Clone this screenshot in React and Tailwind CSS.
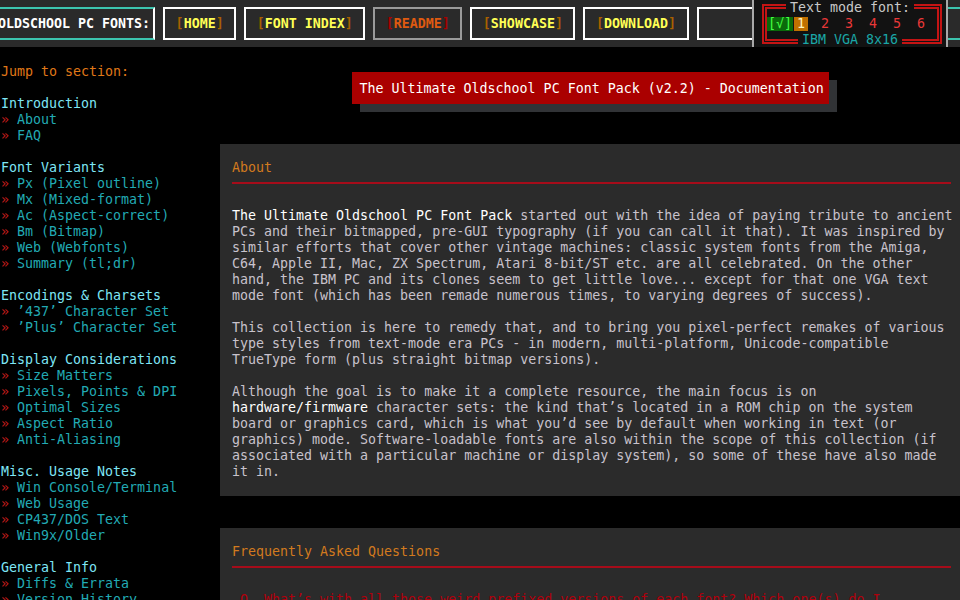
import React from "react";

const MONO = "font-['DejaVu_Sans_Mono','Liberation_Mono',monospace]";

const SECTIONS = [
  { title: "Introduction", items: ["About", "FAQ"] },
  {
    title: "Font Variants",
    items: [
      "Px (Pixel outline)",
      "Mx (Mixed-format)",
      "Ac (Aspect-correct)",
      "Bm (Bitmap)",
      "Web (Webfonts)",
      "Summary (tl;dr)",
    ],
  },
  { title: "Encodings & Charsets", items: ["’437’ Character Set", "’Plus’ Character Set"] },
  {
    title: "Display Considerations",
    items: ["Size Matters", "Pixels, Points & DPI", "Optimal Sizes", "Aspect Ratio", "Anti-Aliasing"],
  },
  {
    title: "Misc. Usage Notes",
    items: ["Win Console/Terminal", "Web Usage", "CP437/DOS Text", "Win9x/Older"],
  },
  { title: "General Info", items: ["Diffs & Errata", "Version History"] },
];

function NavButton({ label, active }) {
  return (
    <div
      className={`flex h-[33px] shrink-0 items-center border-2 px-[10.5px] font-bold ${
        active ? "border-[#9a9a9a]" : "border-white"
      }`}
    >
      <span className={active ? "text-[#a80000]" : "text-[#a86000]"}>[</span>
      <span className={active ? "text-[#e05a10]" : "text-[#ffff55]"}>{label}</span>
      <span className={active ? "text-[#a80000]" : "text-[#a86000]"}>]</span>
    </div>
  );
}

function TopBar() {
  return (
    <div className="flex h-[47px] shrink-0 items-center gap-2 overflow-hidden bg-[#2a2a2a] py-[7px]">
      <div className="ml-[-14px] flex h-[33px] shrink-0 items-center border-y-2 border-r-2 border-y-[#3cc4ae] border-r-white pl-[12px] pr-[3px] font-bold text-white">
        OLDSCHOOL PC FONTS:
      </div>
      <NavButton label="HOME" />
      <NavButton label="FONT INDEX" />
      <NavButton label="README" active />
      <NavButton label="SHOWCASE" />
      <NavButton label="DOWNLOAD" />
      <div className="h-[33px] w-[100px] shrink-0 border-2 border-white" />
      <div className="h-[33px] w-[200px] shrink-0 border-y-2 border-l-2 border-y-[#3cc4ae] border-l-white" />
    </div>
  );
}

function FontPicker() {
  return (
    <div className="absolute left-[752px] top-0 h-[47px] w-[196px] border-x-2 border-[#a8a8a8] bg-[#121212]">
      <div className="absolute bottom-[3px] left-[8px] right-[4px] top-[4px] border-[5px] border-double border-[#c41414]" />
      <div className="relative flex flex-col items-center gap-[2px] pt-[1px] leading-[14px]">
        <span className="bg-[#121212] px-[4px] text-[#c8c8c8]">Text mode font:</span>
        <div className="flex items-center gap-[10px] self-stretch pl-[13px]">
          <span className="bg-[#0a6a0a] px-[1px] text-[#44ff44]">[√]</span>
          <span className="ml-[-9px] w-[14px] bg-[#c07000] text-center text-[#fff4c0]">1</span>
          {["2", "3", "4", "5", "6"].map((n) => (
            <span key={n} className="w-[14px] text-center text-[#e83838]">
              {n}
            </span>
          ))}
        </div>
        <span className="bg-[#121212] px-[4px] text-[#1aa6a6]">IBM VGA 8x16</span>
      </div>
    </div>
  );
}

function Sidebar() {
  return (
    <aside className="w-[220px] shrink-0 pl-[1px] pt-[17px]">
      <div className="text-[#e07818]">Jump to section:</div>
      <div className="h-4" />
      {SECTIONS.map((s) => (
        <div key={s.title} className="mb-4">
          <div className="text-[#7ee6f6]">{s.title}</div>
          {s.items.map((it) => (
            <div key={it} className="whitespace-pre text-[#22aab4]">
              <span className="text-[#c41c1c]">»</span> {it}
            </div>
          ))}
        </div>
      ))}
    </aside>
  );
}

function Panel({ title, children, className = "" }) {
  return (
    <section className={`bg-[#2b2b2b] pb-[16px] pl-[12px] pr-[4px] pt-[16px] ${className}`}>
      <h2 className="text-[#d27a1e]">{title}</h2>
      <div className="mr-[5px] mt-[6px] h-[2px] bg-[#a60c1a]" />
      <div className="mt-[24px] w-[724px]">{children}</div>
    </section>
  );
}

function Content() {
  return (
    <main className="flex w-[740px] shrink-0 flex-col">
      <div className="mt-[25px] self-center">
        <h1 className="w-[477px] bg-[#aa0000] pb-[7px] pl-[8px] pt-[9px] text-white shadow-[8px_8px_0_#313336]">
          The Ultimate Oldschool PC Font Pack (v2.2) - Documentation
        </h1>
      </div>

      <Panel title="About" className="mt-[40px]">
        <div className="flex flex-col gap-4 text-[#c8c2cc]">
          <p>
            <b className="font-normal text-white">The Ultimate Oldschool PC Font Pack</b> started out with the
            idea of paying tribute to ancient PCs and their bitmapped, pre-GUI typography (if you can call it
            that). It was inspired by similar efforts that cover other vintage machines: classic system fonts from
            the Amiga, C64, Apple II, Mac, ZX Spectrum, Atari 8-bit/ST etc. are all celebrated. On the other hand,
            the IBM PC and its clones seem to get little love... except for that one VGA text mode font (which has
            been remade numerous times, to varying degrees of success).
          </p>
          <p>
            This collection is here to remedy that, and to bring you pixel-perfect remakes of various type styles
            from text-mode era PCs - in modern, multi-platform, Unicode-compatible TrueType form (plus straight
            bitmap versions).
          </p>
          <p>
            Although the goal is to make it a complete resource, the main focus is on{" "}
            <b className="whitespace-nowrap font-normal text-white">hardware/firmware</b> character sets: the kind
            that’s located in a ROM chip on the system board or graphics card, which is what you’d see by default
            when working in text (or graphics) mode. Software-loadable fonts are also within the scope of this
            collection (if associated with a particular machine or display system), so some of these have also
            made it in.
          </p>
        </div>
      </Panel>

      <Panel title="Frequently Asked Questions" className="mt-[32px]">
        <p className="w-[664px] pl-[8px] text-[#b0000c]">
          Q. What’s with all those weird prefixed versions of each font? Which one(s) do I need?
        </p>
      </Panel>
    </main>
  );
}

export default function App() {
  return (
    <div
      className={`relative flex h-[600px] w-[960px] flex-col overflow-hidden bg-black text-[13.3px] leading-[16px] ${MONO}`}
    >
      <TopBar />
      <FontPicker />
      <div className="flex">
        <Sidebar />
        <Content />
      </div>
    </div>
  );
}
